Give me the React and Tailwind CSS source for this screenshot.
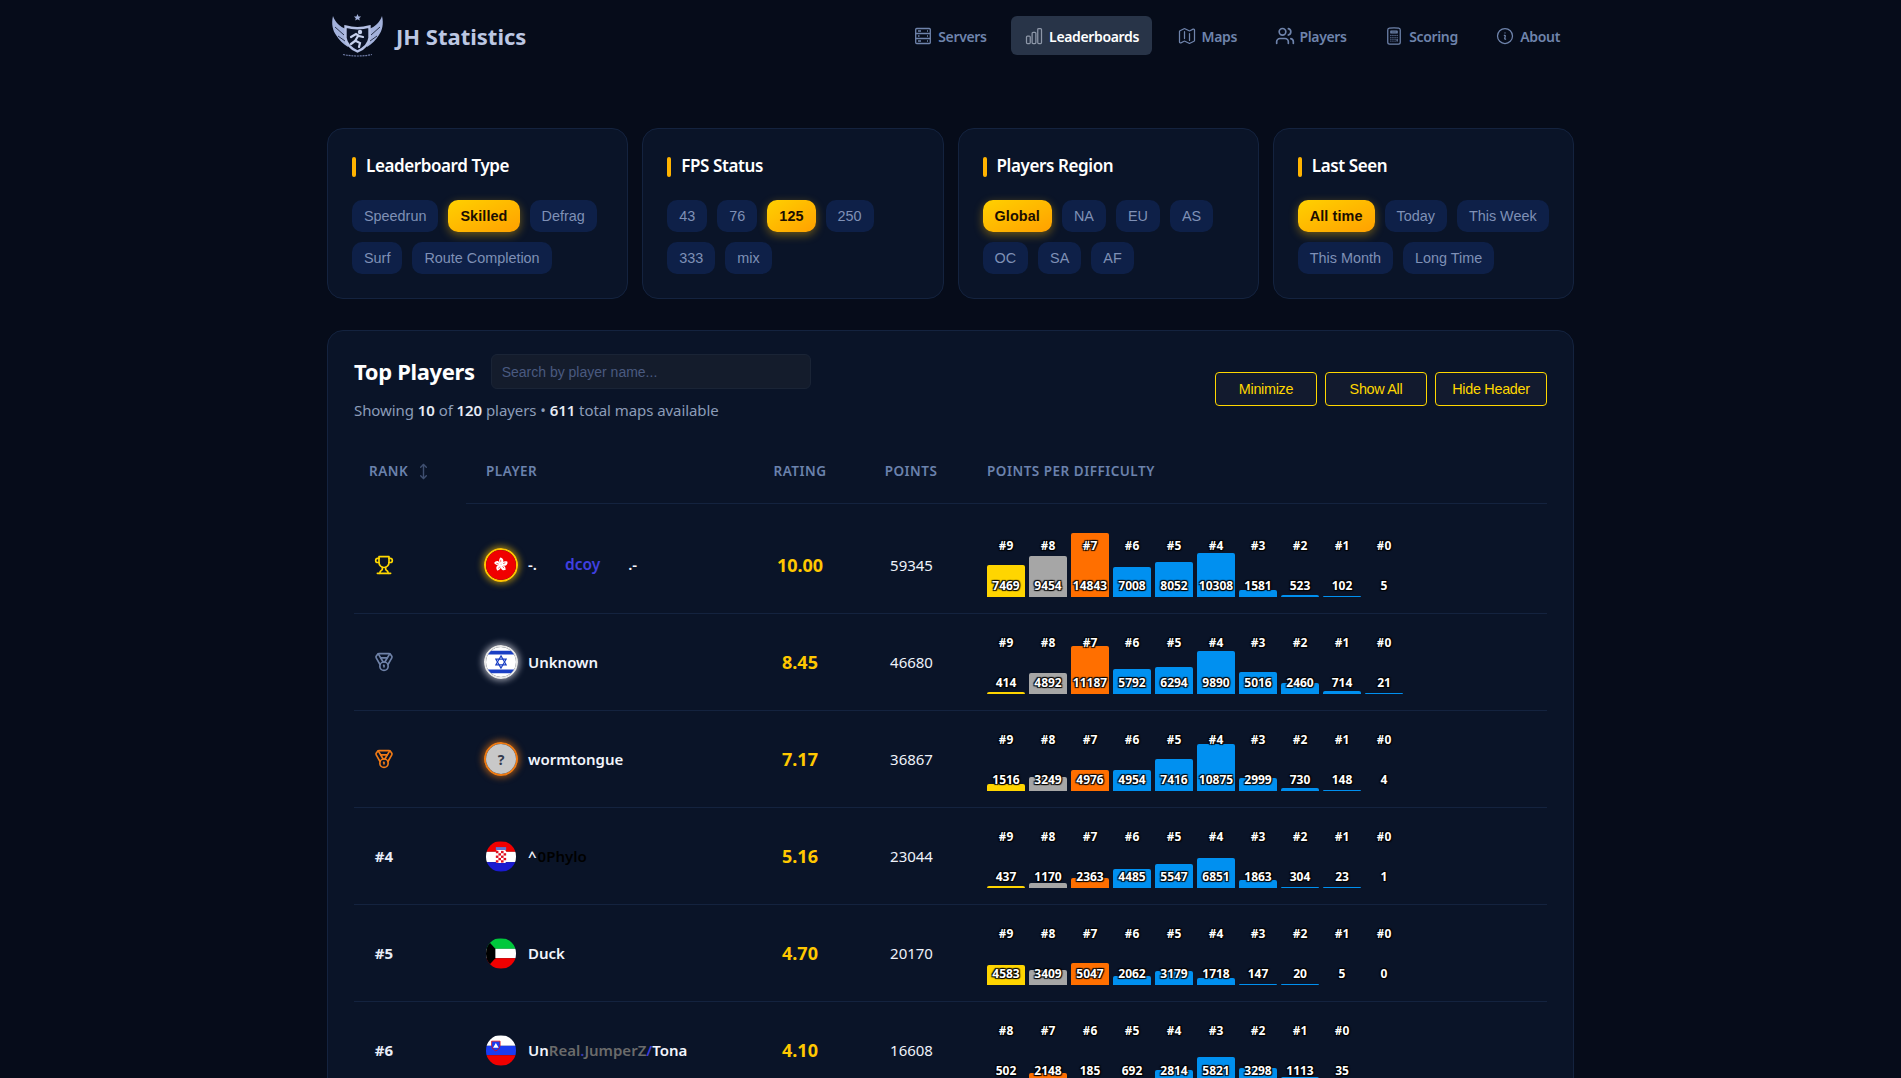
import {
  HiOutlineChartBar,
  HiOutlineMap,
  HiOutlineCalculator,
  HiOutlineInformationCircle,
} from "react-icons/hi2";
import { LuTrophy, LuMedal, LuMoveVertical, LuUsers } from "react-icons/lu";

function ServersIcon({ className }) {
  return (
    <svg viewBox="0 0 20 20" fill="none" stroke="currentColor" strokeWidth="1.300" className={className}>
      <rect x="2.700" y="2.500" width="14.600" height="15" rx="1" />
      <path d="M2.700 7.500h14.600M2.700 12.500h14.600M5 5h3M5 10h1.500M5 15h3M14 5h1M14 10h1M14 15h1" />
    </svg>
  );
}

const navItems = [
  { label: "Servers", icon: ServersIcon },
  { label: "Leaderboards", icon: HiOutlineChartBar, active: true },
  { label: "Maps", icon: HiOutlineMap },
  { label: "Players", icon: LuUsers },
  { label: "Scoring", icon: HiOutlineCalculator },
  { label: "About", icon: HiOutlineInformationCircle },
];

const filters = [
  {
    title: "Leaderboard Type",
    options: ["Speedrun", "Skilled", "Defrag", "Surf", "Route Completion"],
    active: "Skilled",
  },
  {
    title: "FPS Status",
    options: ["43", "76", "125", "250", "333", "mix"],
    active: "125",
  },
  {
    title: "Players Region",
    options: ["Global", "NA", "EU", "AS", "OC", "SA", "AF"],
    active: "Global",
  },
  {
    title: "Last Seen",
    options: ["All time", "Today", "This Week", "This Month", "Long Time"],
    active: "All time",
  },
];

const nineToZero = [9, 8, 7, 6, 5, 4, 3, 2, 1, 0];
const eightToZero = [8, 7, 6, 5, 4, 3, 2, 1, 0];

const players = [
  {
    rank: "gold",
    flag: "hk",
    ring: "border-2 border-[#ffc400] shadow-[0_0_6px_2px_rgba(255,196,0,0.55)]",
    name: (
      <span className="flex">
        <span>-.</span>
        <span className="ml-[28px] text-[15.5px] text-[#4040e0]">dcoy</span>
        <span className="ml-[28px]">.-</span>
      </span>
    ),
    rating: "10.00",
    points: 59345,
    labels: nineToZero,
    values: [7469, 9454, 14843, 7008, 8052, 10308, 1581, 523, 102, 5],
  },
  {
    rank: "silver",
    flag: "il",
    ring: "border-2 border-[#e8e8e8] shadow-[0_0_6px_2px_rgba(235,235,245,0.6)]",
    name: "Unknown",
    rating: "8.45",
    points: 46680,
    labels: nineToZero,
    values: [414, 4892, 11187, 5792, 6294, 9890, 5016, 2460, 714, 21],
  },
  {
    rank: "bronze",
    flag: "unknown",
    ring: "border-2 border-[#ee7a12] shadow-[0_0_6px_2px_rgba(238,122,18,0.55)]",
    name: "wormtongue",
    rating: "7.17",
    points: 36867,
    labels: nineToZero,
    values: [1516, 3249, 4976, 4954, 7416, 10875, 2999, 730, 148, 4],
  },
  {
    rank: "#4",
    flag: "hr",
    name: (
      <>
        ^<span className="ml-[1px] text-[#000]">0Phylo</span>
      </>
    ),
    rating: "5.16",
    points: 23044,
    labels: nineToZero,
    values: [437, 1170, 2363, 4485, 5547, 6851, 1863, 304, 23, 1],
  },
  {
    rank: "#5",
    flag: "kw",
    name: "Duck",
    rating: "4.70",
    points: 20170,
    labels: nineToZero,
    values: [4583, 3409, 5047, 2062, 3179, 1718, 147, 20, 5, 0],
  },
  {
    rank: "#6",
    flag: "si",
    name: (
      <>
        Un<span className="text-[#6b6b6b]">Real</span>
        <span className="text-[#3a3ab0]">.</span>
        <span className="text-[#6b6b6b]">JumperZ</span>
        <span className="text-[#3f3fd8]">/</span>Tona
      </>
    ),
    rating: "4.10",
    points: 16608,
    labels: eightToZero,
    values: [502, 2148, 185, 692, 2814, 5821, 3298, 1113, 35],
  },
];

function barColor(label) {
  if (label === 9) return "bg-[#ffd500]";
  if (label === 8) return "bg-[#a6a6a6]";
  if (label === 7) return "bg-[#ff6f00]";
  return "bg-[#0090f0]";
}

function Logo() {
  return (
    <svg width="56" height="47" viewBox="5 8 56 47" className="ml-[3px] shrink-0" fill="#a3b2dc">
      <path d="M32.500 10l1.100 2.400 2.500.2-1.900 1.600.6 2.400-2.300-1.300-2.300 1.300.6-2.400-1.900-1.600 2.500-.2z" />
      <path d="M8 12C6 20 8 27 11 31c3 5 7 9 12 12l-2-18C15 23 10 18 8 12z" />
      <path d="M57 12c2 8 0 15-3 19-3 5-7 9-12 12l2-18c6-2 11-7 13-13z" />
      <g fill="none" stroke="#0a1226" strokeWidth=".8">
        <path d="M10 23l9 8M13 32l7 5" />
        <path d="M55 23l-9 8M52 32l-7 5" />
      </g>
      <path
        d="M20.500 22.500q12 3.500 24 0v11.500q-1 8.500-12 13.500Q21.500 42.500 20.500 34z"
        fill="#0a1226"
        stroke="#b4c0e4"
        strokeWidth="2.400"
      />
      <circle cx="35" cy="28" r="2.200" fill="#c6d0ec" />
      <path
        d="M26 33l5-3 3 2 4 1M33 32l-3 5-4 3M31 37l4 2 -1 4"
        fill="none"
        stroke="#c6d0ec"
        strokeWidth="2.200"
        strokeLinecap="round"
      />
      <path
        d="M18 50.500q14.500 3 29 0"
        fill="none"
        stroke="#6f7ca6"
        strokeWidth="1.200"
        strokeDasharray="2 .8"
      />
    </svg>
  );
}

function Flag({ code }) {
  if (code === "hk") {
    return (
      <svg viewBox="0 0 32 32" className="h-full w-full">
        <rect width="32" height="32" fill="#f00000" />
        {[0, 72, 144, 216, 288].map((a) => (
          <g key={a} transform={`rotate(${a} 16 15.500)`}>
            <path d="M16 15.500c-2.200-1.500-2.800-4.500-.8-7.500 2.600.5 3.600 2.200 3.200 4-.4 1.500-1.200 2.600-2.400 3.500z" fill="#fff" />
            <path d="M15.700 13v-2.500" stroke="#f00000" strokeWidth=".6" />
          </g>
        ))}
      </svg>
    );
  }
  if (code === "il") {
    return (
      <svg viewBox="0 0 32 32" className="h-full w-full">
        <rect width="32" height="32" fill="#fff" />
        <rect y="4" width="32" height="4" fill="#1a3fc4" />
        <rect y="24" width="32" height="4" fill="#1a3fc4" />
        <g fill="none" stroke="#1a3fc4" strokeWidth="1.300">
          <path d="M16 9.500l5.500 9.500h-11z" />
          <path d="M16 22.500l-5.500-9.500h11z" />
        </g>
      </svg>
    );
  }
  if (code === "unknown") {
    return (
      <div className="flex h-full w-full items-center justify-center bg-[#c8c8c8] text-[14px] font-bold text-[#333a4d]">
        ?
      </div>
    );
  }
  if (code === "hr") {
    return (
      <svg viewBox="0 0 32 32" className="h-full w-full">
        <rect width="32" height="11" fill="#f00000" />
        <rect y="11" width="32" height="11" fill="#fff" />
        <rect y="22" width="32" height="10" fill="#1a1ad0" />
        <rect x="10.500" y="9" width="11" height="14" rx="2" fill="#fff" />
        {[0, 1, 2, 3, 4].map((r) =>
          [0, 1, 2, 3].map((c) =>
            (r + c) % 2 === 0 ? (
              <rect key={`${r}-${c}`} x={10.5 + c * 2.75} y={10 + r * 2.5} width="2.750" height="2.500" fill="#e01020" />
            ) : null
          )
        )}
        <rect x="10.500" y="6" width="11" height="3" fill="#5a78d8" />
      </svg>
    );
  }
  if (code === "kw") {
    return (
      <svg viewBox="0 0 32 32" className="h-full w-full">
        <rect width="32" height="11" fill="#00c83c" />
        <rect y="11" width="32" height="10" fill="#fff" />
        <rect y="21" width="32" height="11" fill="#f00000" />
        <path d="M0 0l10 11v10L0 32z" fill="#000" />
      </svg>
    );
  }
  return (
    <svg viewBox="0 0 32 32" className="h-full w-full">
      <rect width="32" height="11" fill="#fff" />
      <rect y="11" width="32" height="10" fill="#1a3cf0" />
      <rect y="21" width="32" height="11" fill="#f00000" />
      <path d="M6 6h9v5q-.5 4-4.500 5.500Q6.500 15 6 11z" fill="#1a3cf0" stroke="#f00000" strokeWidth=".8" />
      <path d="M10.500 8l3 5h-6z" fill="#fff" />
    </svg>
  );
}

function RankBadge({ rank }) {
  if (rank === "gold") {
    return <LuTrophy className="mx-auto h-[20px] w-[20px] text-[#ffd800]" />;
  }
  if (rank === "silver") {
    return <LuMedal className="mx-auto h-[20px] w-[20px] text-[#6f82a8]" />;
  }
  if (rank === "bronze") {
    return <LuMedal className="mx-auto h-[20px] w-[20px] text-[#f07a16]" />;
  }
  return <span className="text-[15px] font-bold text-[#e8edf8]">{rank}</span>;
}

function Bars({ labels, values }) {
  return (
    <div className="flex h-[64px] items-end gap-[4px]">
      {values.map((v, i) => {
        const h = Math.max(v / 232, v >= 10 ? 1 : 0);
        return (
          <div key={i} className="relative flex h-full w-[38px] items-end">
            <div className={`w-full rounded-t-[2px] ${barColor(labels[i])}`} style={{ height: `${h}px` }} />
            <span className="absolute inset-x-0 top-[5px] text-center text-[12px] leading-[16px] font-bold text-white [text-shadow:1px_1px_1px_#000,-1px_-1px_1px_#000,1px_-1px_1px_#000,-1px_1px_1px_#000]">
              #{labels[i]}
            </span>
            <span className="absolute inset-x-0 bottom-[3px] text-center text-[12px] leading-[16px] font-bold text-white [text-shadow:1px_1px_1px_#000,-1px_-1px_1px_#000,1px_-1px_1px_#000,-1px_1px_1px_#000]">
              {v}
            </span>
          </div>
        );
      })}
    </div>
  );
}

export default function App() {
  return (
    <div className="h-[1078px] overflow-hidden bg-[#060c1a] font-['Noto_Sans',sans-serif]">
      <div className="mx-auto w-[1279px] px-[16px]">
        <header className="flex h-[71px] items-center justify-between">
          <div className="flex items-center gap-[10px]">
            <Logo />
            <span className="mt-[1px] text-[22px] font-bold text-[#bcc7e2]">JH Statistics</span>
          </div>
          <nav className="flex items-center gap-[11.5px]">
            {navItems.map((item) => (
              <a
                key={item.label}
                className={`flex h-[39px] items-center gap-[5px] rounded-[6px] px-[13px] pt-[2px] text-[14px] font-semibold tracking-[-0.35px] last:pr-[14px] ${
                  item.active ? "bg-[#283448] text-white" : "text-[#6f84ac]"
                }`}
              >
                <item.icon className={`-mt-[1px] h-[20px] w-[20px] ${item.active ? "text-[#8d97a8]" : "text-[#6f84ac]"}`} />
                {item.label}
              </a>
            ))}
          </nav>
        </header>

        <section className="mt-[57px] grid grid-cols-4 gap-[14px]">
          {filters.map((f) => (
            <div key={f.title} className="h-[171px] rounded-[16px] border border-[#14233f] bg-[#0a1428] px-[24px] pt-[28px]">
              <div className="flex h-[20px] items-center gap-[10px] text-[17px] font-semibold tracking-[-0.4px] text-white">
                <span className="h-[20px] w-[4px] rounded-[2px] bg-[#ffb300]" />
                <span className="-mt-[2px]">{f.title}</span>
              </div>
              <div className="mt-[23px] flex flex-wrap gap-[10px] font-['Liberation_Sans',sans-serif] text-[14.4px]">
                {f.options.map((o) =>
                  o === f.active ? (
                    <span
                      key={o}
                      className="flex h-[32px] items-center rounded-[10px] bg-gradient-to-br from-[#ffd000] to-[#ffa000] px-[12px] pt-[1px] font-bold tracking-[0.1px] text-[#1c0e00] shadow-[0_3px_10px_rgba(255,190,0,0.4)]"
                    >
                      {o}
                    </span>
                  ) : (
                    <span key={o} className="flex h-[32px] items-center rounded-[10px] bg-[#0e2048] px-[12px] pt-[1px] text-[#7f90b6]">
                      {o}
                    </span>
                  )
                )}
              </div>
            </div>
          ))}
        </section>

        <section className="mt-[31px] rounded-t-[16px] border border-[#14233f] bg-[#0a1428] px-[26px] pt-[23px]">
          <div className="flex items-center justify-between">
            <div>
              <div className="flex h-[35px] items-center gap-[16px]">
                <h2 className="text-[22px] font-bold tracking-[-0.35px] text-white">Top Players</h2>
                <input
                  placeholder="Search by player name..."
                  className="h-[35px] w-[320px] rounded-[6px] border border-[#1a2436] bg-[#141c2c] px-[10px] pt-[1px] font-['Liberation_Sans',sans-serif] text-[14px] placeholder:text-[#4a5a80]"
                />
              </div>
              <p className="mt-[10px] text-[15px] leading-[22px] tracking-[-0.07px] text-[#8c9cb8]">
                Showing <b className="font-semibold text-[#e6ebf5]">10</b> of{" "}
                <b className="font-semibold text-[#e6ebf5]">120</b> players •{" "}
                <b className="font-semibold text-[#e6ebf5]">611</b> total maps available
              </p>
            </div>
            <div className="mt-[3px] flex gap-[8px] font-['Liberation_Sans',sans-serif] text-[14.4px] tracking-[-0.3px] text-[#ffd700]">
              <button className="h-[34px] w-[102px] rounded-[4px] border border-[#ffd700] bg-[#121a2e] pt-[1px]">Minimize</button>
              <button className="h-[34px] w-[102px] rounded-[4px] border border-[#ffd700] bg-[#121a2e] pt-[1px]">Show All</button>
              <button className="h-[34px] w-[112px] rounded-[4px] border border-[#ffd700] bg-[#121a2e] pt-[1px]">Hide Header</button>
            </div>
          </div>

          <div className="mt-[17px] grid h-[66px] grid-cols-[112px_281px_106px_116px_1fr] items-stretch text-[13.5px] font-semibold tracking-[0.5px] text-[#6b82ad] uppercase">
            <div className="flex items-center gap-[7px] pl-[15px]">
              RANK
              <LuMoveVertical className="h-[17px] w-[17px] text-[#3f4f70]" />
            </div>
            <div className="flex items-center border-b border-[#14233f] pt-[2px] pl-[20px]">Player</div>
            <div className="flex items-center justify-center border-b border-[#14233f] pt-[2px]">Rating</div>
            <div className="flex items-center justify-center border-b border-[#14233f] pt-[2px]">Points</div>
            <div className="flex items-center border-b border-[#14233f] pt-[2px] pl-[18px]">Points per difficulty</div>
          </div>

          <div className="pt-[13px]">
            {players.map((p) => (
              <div
                key={p.points}
                className="grid h-[97px] grid-cols-[110px_283px_106px_116px_1fr] items-center border-b border-[#14233f]"
              >
                <div className="w-[60px] text-center">
                  <RankBadge rank={p.rank} />
                </div>
                <div className="flex items-center pl-[21px]">
                  <div
                    className={`shrink-0 overflow-hidden rounded-full ${
                      p.ring ? `-mx-[1px] h-[34px] w-[34px] ${p.ring}` : "mx-[1px] h-[31px] w-[30px]"
                    }`}
                  >
                    <Flag code={p.flag} />
                  </div>
                  <div className="ml-[11px] text-[15px] font-semibold text-[#f2f5fc]">{p.name}</div>
                </div>
                <div className="text-center text-[18px] font-bold text-[#ffc800]">{p.rating}</div>
                <div className="pl-[1px] text-center text-[15px] text-[#eef2fa]">{p.points}</div>
                <div className="pl-[18px]">
                  <Bars labels={p.labels} values={p.values} />
                </div>
              </div>
            ))}
          </div>
        </section>
      </div>
    </div>
  );
}
